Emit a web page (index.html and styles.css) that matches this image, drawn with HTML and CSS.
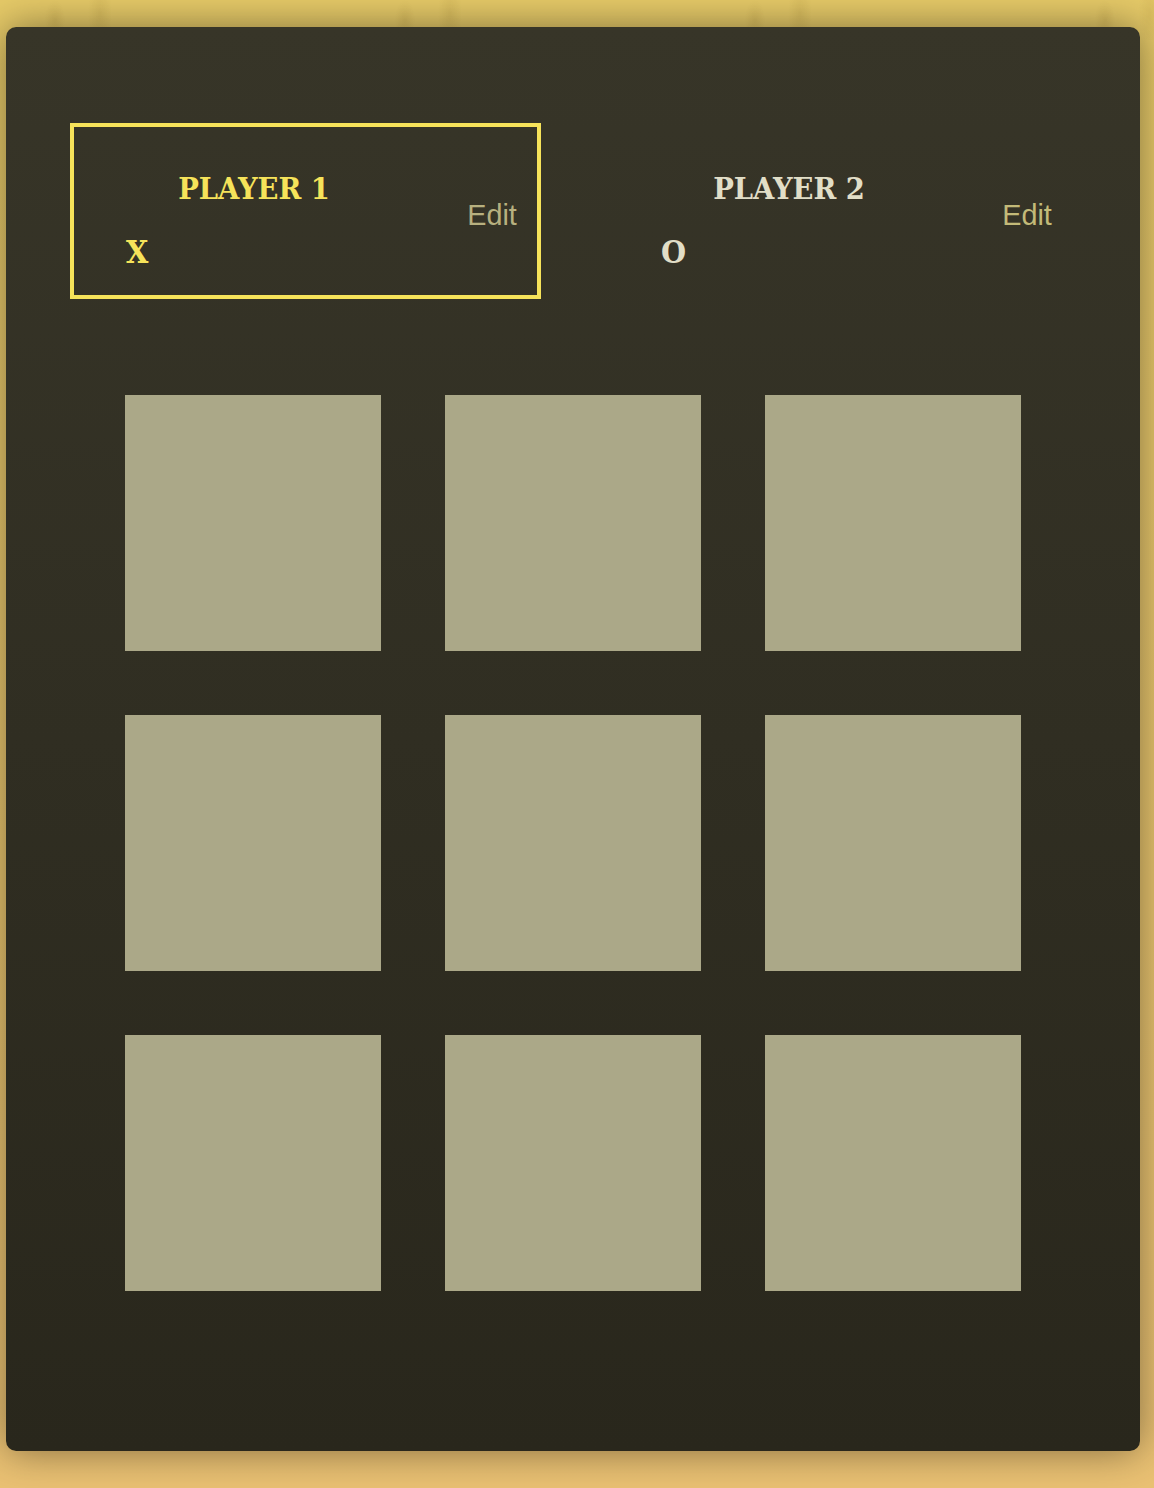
FILE: index.html
```html
<!DOCTYPE html>
<html lang="en">
<head>
<meta charset="utf-8">
<title>Tic-Tac-Toe</title>
<link rel="stylesheet" href="styles.css">
</head>
<body>
  <main class="game">
    <ol class="players">
      <li class="player-item active">
        <span class="player">
          <span class="player-name">Player 1</span>
          <span class="player-symbol">X</span>
        </span>
        <button class="edit">Edit</button>
      </li>
      <li class="player-item">
        <span class="player">
          <span class="player-name">Player 2</span>
          <span class="player-symbol">O</span>
        </span>
        <button class="edit">Edit</button>
      </li>
    </ol>
    <ol class="board">
      <li><ol class="row">
        <li><button class="cell"></button></li>
        <li><button class="cell"></button></li>
        <li><button class="cell"></button></li>
      </ol></li>
      <li><ol class="row">
        <li><button class="cell"></button></li>
        <li><button class="cell"></button></li>
        <li><button class="cell"></button></li>
      </ol></li>
      <li><ol class="row">
        <li><button class="cell"></button></li>
        <li><button class="cell"></button></li>
        <li><button class="cell"></button></li>
      </ol></li>
    </ol>
  </main>
</body>
</html>
```

FILE: styles.css
```css
html, body {
  margin: 0;
  padding: 0;
}

body {
  min-height: 1488px;
  overflow: hidden;
  font-family: "DejaVu Serif Condensed", "DejaVu Serif", serif;
  background:
    radial-gradient(ellipse 10px 20px at 55px 20px, rgba(150, 120, 40, 0.14), rgba(150, 120, 40, 0) 100%) 0 0 / 350px 40px repeat-x,
    radial-gradient(ellipse 12px 32px at 100px 14px, rgba(150, 120, 40, 0.14), rgba(150, 120, 40, 0) 100%) 0 0 / 350px 40px repeat-x,
    linear-gradient(#e6ca68, #e8c46e 60%, #eac173);
}

.game {
  width: 1134px;
  box-sizing: border-box;
  margin: 27px 0 0 6px;
  padding: 64px;
  border-radius: 10px;
  background: linear-gradient(#373528, #29271c);
  box-shadow: 0 0 40px rgba(0, 0, 0, 0.45);
}

.players {
  list-style: none;
  margin: 32px 0 0;
  padding: 0;
  display: flex;
  gap: 64px;
}

.player-item {
  flex: 1;
  height: 176px;
  box-sizing: border-box;
  border: 4px solid transparent;
  display: flex;
  align-items: center;
  justify-content: space-between;
}

.player-item.active {
  border-color: #f6e35a;
}

.player {
  align-self: flex-start;
  display: flex;
  flex-direction: column;
  padding-top: 40px;
  font-weight: bold;
}

.player-name {
  width: 320px;
  margin-left: 20px;
  text-align: center;
  font-size: 30.5px;
  line-height: 42px;
  text-transform: uppercase;
  color: #e1dec7;
  white-space: nowrap;
}

.player-symbol {
  margin: 22px 0 0 52px;
  font-size: 32px;
  line-height: 42px;
  color: #e1dec7;
}

.active .player-name,
.active .player-symbol {
  color: #f6e35a;
}

.edit {
  width: 96px;
  margin-right: -3px;
  padding: 16px 8px 8px;
  border: none;
  background: none;
  font-family: "Liberation Sans", Arial, sans-serif;
  font-size: 28.8px;
  color: #c3ba78;
  text-align: center;
  cursor: pointer;
}

.active .edit {
  color: #b7b07f;
}

.board {
  list-style: none;
  margin: 96px 0;
  padding: 0;
  display: flex;
  flex-direction: column;
  align-items: center;
  gap: 64px;
}

.row {
  list-style: none;
  margin: 0;
  padding: 0;
  display: flex;
  gap: 64px;
}

.row li {
  display: block;
}

.cell {
  display: block;
  width: 256px;
  height: 256px;
  border: none;
  padding: 0;
  background: #aba888;
  cursor: pointer;
}
```
